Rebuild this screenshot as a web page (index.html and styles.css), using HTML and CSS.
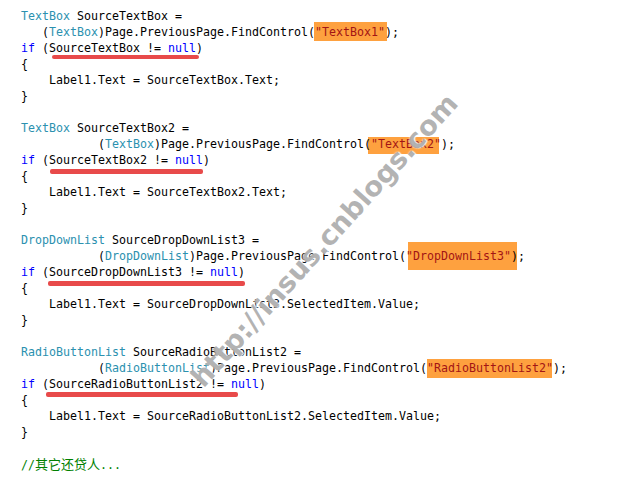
FILE: index.html
```html
<!DOCTYPE html>
<html>
<head>
    <link rel="stylesheet" href="styles.css">
</head>

<body>
    <div class="sheet">
<pre class="code"><span class="type">TextBox</span> SourceTextBox =
   (<span class="type">TextBox</span>)Page.PreviousPage.FindControl(<span class="str mark hl-1">"TextBox1"</span>);
<span class="kw">if</span> (<span class="under ul-1">SourceTextBox != <span class="kw">null</span></span>)
{
    Label1.Text = SourceTextBox.Text;
}

<span class="type">TextBox</span> SourceTextBox2 =
           (<span class="type">TextBox</span>)Page.PreviousPage.FindControl(<span class="str mark hl-2">"TextBox2"</span>);
<span class="kw">if</span> (<span class="under ul-2">SourceTextBox2 != <span class="kw">null</span></span>)
{
    Label1.Text = SourceTextBox2.Text;
}

<span class="type">DropDownList</span> SourceDropDownList3 =
           (<span class="type">DropDownList</span>)Page.PreviousPage.FindControl(<span class="str mark hl-3">"DropDownList3"</span>);
<span class="kw">if</span> (<span class="under ul-3">SourceDropDownList3 != <span class="kw">null</span></span>)
{
    Label1.Text = SourceDropDownList3.SelectedItem.Value;
}

<span class="type">RadioButtonList</span> SourceRadioButtonList2 =
           (<span class="type">RadioButtonList</span>)Page.PreviousPage.FindControl(<span class="str mark hl-4">"RadioButtonList2"</span>);
<span class="kw">if</span> (<span class="under ul-4">SourceRadioButtonList2 != <span class="kw">null</span></span>)
{
    Label1.Text = SourceRadioButtonList2.SelectedItem.Value;
}

<span class="comment">//<span class="cjk">其它还贷人</span>...</span></pre>
        <div class="watermark">http://insus.cnblogs.com</div>
    </div>
</body>

</html>
```

FILE: styles.css
```css
body{
    margin: 0;
    background-color: #fff;
}
.sheet{
    position: relative;
    width: 623px;
    height: 478px;
    overflow: hidden;
}
.code{
    margin: 0;
    padding: 8px 0 0 21px;
    font-family: "DejaVu Sans Mono", "Liberation Mono", monospace;
    font-size: 11.63px;
    line-height: 16px;
    color: #000;
}
.type{
    color: #2b91af;
}
.kw{
    color: #0000ff;
}
.str{
    color: #a31515;
}
.comment{
    color: #008000;
}
.cjk{
    font-family: "Noto Sans CJK SC", sans-serif;
    font-size: 13px;
}

/* orange marker boxes drawn on the screenshot */
.mark{
    position: relative;
}
.mark::before{
    content: "";
    position: absolute;
    z-index: -1;
    background-color: #fea13f;
}
.hl-1::before{ left: -1px; right: -2px; top: -3px; bottom: -2px; }
.hl-2::before{ left: -3px; right: 2px; top: 0; bottom: -3px; }
.hl-3::before{ left: 2px; right: -6px; top: -7px; bottom: -7px; }
.hl-4::before{ left: 0; right: 1px; top: -2px; bottom: -3px; }

/* red pen underlines */
.under{
    position: relative;
}
.under::after{
    content: "";
    position: absolute;
    height: 5px;
    border-radius: 2px;
    background-color: #e84a4a;
}
.ul-1::after{ left: 3px; right: -3px; top: 14px; height: 4px; }
.ul-2::after{ left: 1px; right: 0; top: 16px; }
.ul-3::after{ left: -1px; right: -7px; top: 16px; }
.ul-4::after{ left: -3px; right: 21px; top: 15px; }

.watermark{
    position: absolute;
    left: 324px;
    top: 240px;
    transform: translate(-50%, -50%) rotate(-48deg);
    font-family: "DejaVu Sans", Verdana, sans-serif;
    font-weight: bold;
    font-size: 27.5px;
    white-space: nowrap;
    color: rgba(150, 150, 150, 0.72);
    text-shadow: 0 0 2px rgba(255, 255, 255, 0.85), 1px 1px 1px rgba(255, 255, 255, 0.8);
    pointer-events: none;
}
```
